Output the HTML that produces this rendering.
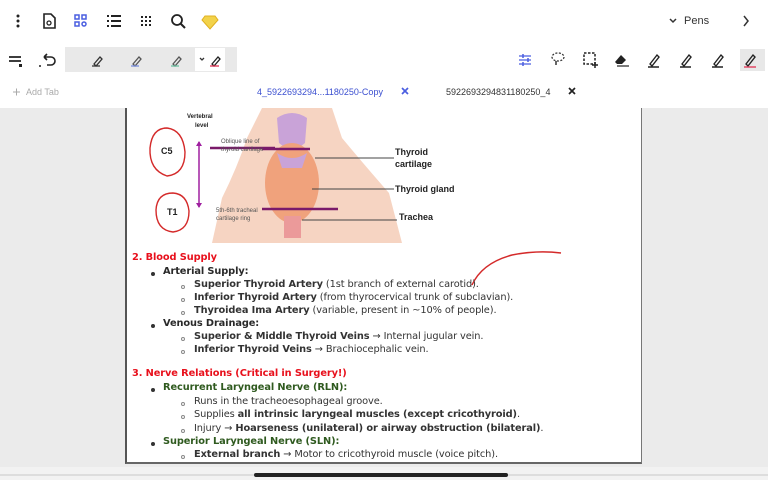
<!DOCTYPE html>
<html><head><style>
*{margin:0;padding:0;box-sizing:border-box}
body{width:768px;height:480px;overflow:hidden;background:#ebebeb;font-family:"Liberation Sans",sans-serif;position:relative}
.top{position:absolute;left:0;top:0;width:768px;height:108px;background:#fff}
.a{position:absolute}
.page{position:absolute;left:125px;top:108px;width:517px;height:356px;background:#fff;border-left:2px solid #555;border-right:1px solid #777;border-bottom:2px solid #666}
.t{position:absolute;font-family:"DejaVu Sans",sans-serif;font-size:9.8px;color:#333;white-space:nowrap;letter-spacing:-0.1px}
.b{font-weight:bold;color:#2a2a2a}
.r{color:#e8101c;font-weight:bold}
.g{color:#2f5a1f;font-weight:bold}
.dot{position:absolute;width:4px;height:4px;border-radius:50%;background:#333}
.cir{position:absolute;width:4px;height:4px;border-radius:50%;border:1px solid #888}
</style></head><body>
<div class="top"></div>
<svg class="a" style="left:0;top:0" width="768" height="108">
<g fill="#222"><circle cx="18" cy="16" r="1.5"/><circle cx="18" cy="21" r="1.5"/><circle cx="18" cy="26" r="1.5"/></g>
<path d="M44 14h7l4 4v10h-11z" fill="none" stroke="#222" stroke-width="1.6"/><circle cx="49" cy="23" r="2" fill="none" stroke="#222" stroke-width="1.3"/>
<g fill="none" stroke="#4a5ee0" stroke-width="1.5"><rect x="75" y="15" width="4" height="4"/><rect x="82" y="15" width="4" height="4"/><rect x="75" y="22" width="4" height="4"/><circle cx="84" cy="24" r="2"/></g>
<g fill="#222"><rect x="107" y="15" width="2" height="2"/><rect x="111" y="15" width="10" height="2"/><rect x="107" y="20" width="2" height="2"/><rect x="111" y="20" width="10" height="2"/><rect x="107" y="25" width="2" height="2"/><rect x="111" y="25" width="10" height="2"/></g>
<g fill="#222"><rect x="141" y="16" width="2" height="2"/><rect x="145" y="16" width="2" height="2"/><rect x="149" y="16" width="2" height="2"/><rect x="141" y="20" width="2" height="2"/><rect x="145" y="20" width="2" height="2"/><rect x="149" y="20" width="2" height="2"/><rect x="141" y="24" width="2" height="2"/><rect x="145" y="24" width="2" height="2"/><rect x="149" y="24" width="2" height="2"/></g>
<circle cx="177" cy="20" r="5" fill="none" stroke="#222" stroke-width="1.8"/><path d="M181 24l4 4" stroke="#222" stroke-width="2"/>
<path d="M205 16h10l3 4-8 9-8-9z" fill="#f2d24a" stroke="#e0b020" stroke-width="1"/>
<path d="M670 19l3 3 3-3" fill="none" stroke="#333" stroke-width="1.5"/>
<path d="M744 16l4 5-4 5" fill="none" stroke="#333" stroke-width="1.5"/>
<path d="M9 57h12M9 61h12" stroke="#222" stroke-width="1.8"/><rect x="19" y="64" width="3" height="3" fill="#222"/>
<path d="M44 57h7a4 4 0 0 1 0 8h-4M44 57l3-3M44 57l3 3" fill="none" stroke="#222" stroke-width="1.6"/><circle cx="40" cy="66" r="1" fill="#222"/>
<rect x="65" y="47" width="172" height="25" fill="#e9e9e9"/>
<rect x="195" y="48" width="30" height="23" fill="#fff"/>
<g fill="none" stroke-width="1.3"><path d="M94 64l6-7 2 2-6 7z M92 66h8" stroke="#333"/><path d="M133 64l6-7 2 2-6 7z" stroke="#555"/><path d="M131 66h8" stroke="#7a8ee0"/><path d="M173 64l6-7 2 2-6 7z" stroke="#555"/><path d="M171 66h8" stroke="#6bc1a0"/><path d="M212 64l6-7 2 2-6 7z" stroke="#222"/><path d="M210 66h9" stroke="#e03050"/><path d="M200 58l2 2 2-2" stroke="#333"/></g>
<path d="M519 56h12M519 60h12M519 64h12" stroke="#4a5ee0" stroke-width="1.3"/><path d="M523 54v4M528 58v4M523 62v4" stroke="#4a5ee0" stroke-width="1.5"/>
<ellipse cx="558" cy="57" rx="6" ry="4" fill="none" stroke="#333" stroke-width="1.3" stroke-dasharray="2 1.5"/><path d="M556 61v4" stroke="#333" stroke-width="1.5"/>
<rect x="584" y="53" width="11" height="11" fill="none" stroke="#222" stroke-width="1.5" stroke-dasharray="2.5 1.5"/><path d="M595 62v6M592 65h6" stroke="#222" stroke-width="1.5"/>
<path d="M615 62l6-7 5 5-4 4h-5z" fill="#222"/><path d="M617 66h12" stroke="#222" stroke-width="1.2"/>
<g fill="none" stroke="#222" stroke-width="1.4"><path d="M650 64l7-9 2 2-7 9z M648 67h11"/><path d="M682 64l7-9 2 2-7 9z M680 67h11"/><path d="M714 64l7-9 2 2-7 9z M712 67h11"/></g>
<rect x="740" y="49" width="25" height="22" fill="#e8e8e8"/><path d="M746 64l7-9 2 2-7 9z" fill="none" stroke="#222" stroke-width="1.4"/><path d="M744 67h12" stroke="#e03050" stroke-width="1.3"/>
<path d="M13 92h7M16.5 88.5v7" stroke="#aaa" stroke-width="1"/>
<path d="M402 88l6 6M408 88l-6 6" stroke="#4a5ee0" stroke-width="1.7"/>
<path d="M569 88l6 6M575 88l-6 6" stroke="#222" stroke-width="1.7"/>
</svg>
<div class="a" style="left:684px;top:15px;font-size:11px;color:#333">Pens</div>
<div class="a" style="left:26px;top:87px;font-size:9px;color:#aaa">Add Tab</div>
<div class="a" style="left:257px;top:87px;font-size:9px;color:#3b4fd0">4_5922693294...1180250-Copy</div>
<div class="a" style="left:446px;top:87px;font-size:9px;color:#333">5922693294831180250_4</div>

<div class="page">
<svg class="a" style="left:0;top:0" width="515" height="200">
<path d="M85 135 L95 90 Q110 60 120 30 L135 0 H205 L215 30 Q240 60 262 85 L275 135 Z" fill="#f6d4c2"/>
<path d="M150 10 Q165 0 180 10 L178 35 L165 45 L152 35 Z" fill="#c9a3d8"/>
<ellipse cx="165" cy="75" rx="27" ry="40" fill="#f0a27c"/>
<path d="M150 45 Q165 55 180 45 L175 60 H155 Z" fill="#c9a3d8"/>
<rect x="157" y="108" width="17" height="22" fill="#eb9a9a"/>
<path d="M83 40H148M135 41H183M135 101H211" stroke="#7a1a6a" stroke-width="2.5"/>
<path d="M188 50H267M185 81H267M175 112H270" stroke="#444" stroke-width="1"/>
<path d="M72 34v65" stroke="#a020a0" stroke-width="1.5"/><path d="M69 38l3-5 3 5M69 95l3 5 3-5" fill="#a020a0"/>
<path d="M40 20 Q25 20 23 40 Q22 62 40 68 Q58 66 58 44 Q56 22 40 20" fill="none" stroke="#d42a2a" stroke-width="1.4"/>
<path d="M46 85 Q30 85 29 102 Q29 122 46 124 Q62 122 62 103 Q60 86 46 85" fill="none" stroke="#d42a2a" stroke-width="1.4"/>
<text x="60" y="10" font-size="6" font-weight="bold" fill="#222" font-family="Liberation Sans">Vertebral</text>
<text x="68" y="19" font-size="6" font-weight="bold" fill="#222" font-family="Liberation Sans">level</text>
<text x="34" y="46" font-size="9" font-weight="bold" fill="#222" font-family="Liberation Sans">C5</text>
<text x="40" y="107" font-size="9" font-weight="bold" fill="#222" font-family="Liberation Sans">T1</text>
<text x="94" y="35" font-size="6" fill="#555" font-family="Liberation Sans">Oblique line of</text>
<text x="94" y="43" font-size="6" fill="#555" font-family="Liberation Sans">thyroid cartilage</text>
<text x="89" y="104" font-size="6" fill="#555" font-family="Liberation Sans">5th-6th tracheal</text>
<text x="89" y="112" font-size="6" fill="#555" font-family="Liberation Sans">cartilage ring</text>
<text x="268" y="47" font-size="9" font-weight="bold" fill="#222" font-family="Liberation Sans">Thyroid</text>
<text x="268" y="59" font-size="9" font-weight="bold" fill="#222" font-family="Liberation Sans">cartilage</text>
<text x="268" y="84" font-size="9" font-weight="bold" fill="#222" font-family="Liberation Sans">Thyroid gland</text>
<text x="272" y="112" font-size="9" font-weight="bold" fill="#222" font-family="Liberation Sans">Trachea</text>
<path d="M345 177 Q355 155 385 147 Q410 142 434 145" fill="none" stroke="#d42a2a" stroke-width="1.5"/>
</svg>
<div class="t r" style="left:5px;top:144px">2. Blood Supply</div>
<div class="dot" style="left:24px;top:164px"></div><div class="t b" style="left:36px;top:158px">Arterial Supply:</div>
<div class="cir" style="left:54px;top:177px"></div><div class="t" style="left:67px;top:171px"><b>Superior Thyroid Artery</b> (1st branch of external carotid).</div>
<div class="cir" style="left:54px;top:190px"></div><div class="t" style="left:67px;top:184px"><b>Inferior Thyroid Artery</b> (from thyrocervical trunk of subclavian).</div>
<div class="cir" style="left:54px;top:203px"></div><div class="t" style="left:67px;top:197px"><b>Thyroidea Ima Artery</b> (variable, present in ~10% of people).</div>
<div class="dot" style="left:24px;top:216px"></div><div class="t b" style="left:36px;top:210px">Venous Drainage:</div>
<div class="cir" style="left:54px;top:229px"></div><div class="t" style="left:67px;top:223px"><b>Superior &amp; Middle Thyroid Veins</b> → Internal jugular vein.</div>
<div class="cir" style="left:54px;top:242px"></div><div class="t" style="left:67px;top:236px"><b>Inferior Thyroid Veins</b> → Brachiocephalic vein.</div>
<div class="t r" style="left:5px;top:260px">3. Nerve Relations (Critical in Surgery!)</div>
<div class="dot" style="left:24px;top:280px"></div><div class="t g" style="left:36px;top:274px">Recurrent Laryngeal Nerve (RLN):</div>
<div class="cir" style="left:54px;top:294px"></div><div class="t" style="left:67px;top:288px">Runs in the tracheoesophageal groove.</div>
<div class="cir" style="left:54px;top:307px"></div><div class="t" style="left:67px;top:301px">Supplies <b>all intrinsic laryngeal muscles (except cricothyroid)</b>.</div>
<div class="cir" style="left:54px;top:321px"></div><div class="t" style="left:67px;top:315px">Injury → <b>Hoarseness (unilateral) or airway obstruction (bilateral)</b>.</div>
<div class="dot" style="left:24px;top:334px"></div><div class="t g" style="left:36px;top:328px">Superior Laryngeal Nerve (SLN):</div>
<div class="cir" style="left:54px;top:347px"></div><div class="t" style="left:67px;top:341px"><b>External branch</b> → Motor to cricothyroid muscle (voice pitch).</div>
</div>
<div class="a" style="left:0;top:467px;width:768px;height:13px;background:#f2f2f2"></div>
<div class="a" style="left:0;top:474px;width:768px;height:2px;background:#ddd"></div>
<div class="a" style="left:254px;top:473px;width:254px;height:4px;border-radius:2px;background:#222"></div>
</body></html>
